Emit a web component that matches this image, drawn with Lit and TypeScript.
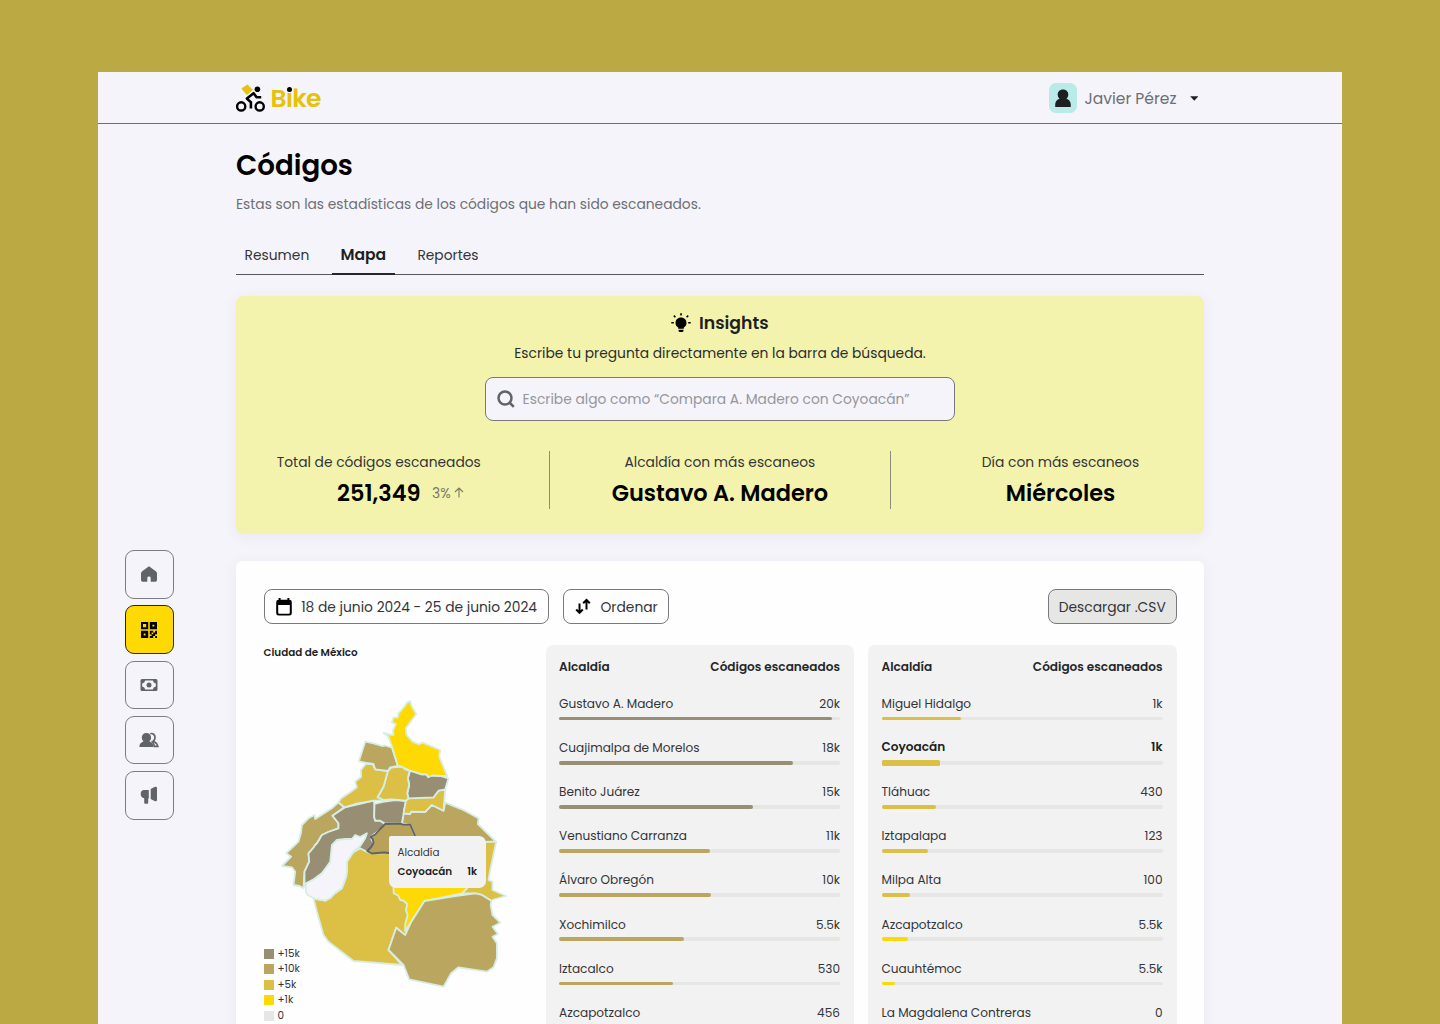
import { LitElement, html, svg, css } from "lit";
import { customElement } from "lit/decorators.js";
import { classMap } from "lit/directives/class-map.js";

interface Row {
  name: string;
  value: string;
  fill: number;
  tone: "dark" | "tan" | "gold" | "sun";
  active?: boolean;
}

const LEFT: Row[] = [
  { name: "Gustavo A. Madero", value: "20k", fill: 97, tone: "dark" },
  { name: "Cuajimalpa de Morelos", value: "18k", fill: 83.3, tone: "dark" },
  { name: "Benito Juárez", value: "15k", fill: 69, tone: "dark" },
  { name: "Venustiano Carranza", value: "11k", fill: 53.8, tone: "tan" },
  { name: "Álvaro Obregón", value: "10k", fill: 54.2, tone: "tan" },
  { name: "Xochimilco", value: "5.5k", fill: 44.5, tone: "tan" },
  { name: "Iztacalco", value: "530", fill: 40.6, tone: "tan" },
  { name: "Azcapotzalco", value: "456", fill: 36, tone: "gold" },
];

const RIGHT: Row[] = [
  { name: "Miguel Hidalgo", value: "1k", fill: 28.4, tone: "gold" },
  { name: "Coyoacán", value: "1k", fill: 20.8, tone: "gold", active: true },
  { name: "Tláhuac", value: "430", fill: 19.5, tone: "gold" },
  { name: "Iztapalapa", value: "123", fill: 16.5, tone: "gold" },
  { name: "Milpa Alta", value: "100", fill: 10.2, tone: "gold" },
  { name: "Azcapotzalco", value: "5.5k", fill: 9.5, tone: "sun" },
  { name: "Cuauhtémoc", value: "5.5k", fill: 4.8, tone: "sun" },
  { name: "La Magdalena Contreras", value: "0", fill: 0, tone: "sun" },
];

const REGIONS: { tone: string; points: string }[] = [
  { tone: "gold", points: "353.3,851.7 360,848.3 366.7,851.7 373.3,853.3 400,853 430,853 470,870 466.7,888.3 424,901 405,935 403.3,935 396,927.7 388.3,950 401.7,965 353.3,961 328.3,941.7 323.3,935 316.7,911.7 313.3,898.3 325,900.7 341.7,888.3 346,876.7 346.7,861.7" },
  { tone: "gold", points: "460,838 485,841.7 496,841.7 490,870 488.3,880 492.3,881.7 492.3,890 505.7,896 495,899 491,900.7 481.7,895 475,893.3 461.7,893.3 466.7,888.3 470,865" },
  { tone: "tan", points: "445,802.7 461.7,809.3 478.3,818.3 477.7,824 493.3,839.3 495,841.4 485,842 470,865 430,860 415,836 410,824.3 401.7,823.3 403.3,813.3 410,814 411,811.7 425,812 431.7,805 443.3,810.7" },
  { tone: "sun", points: "393,880 470,880 466.7,888.3 461.7,893.3 440,898 424.3,901 405,931 405,924 407.5,915 405.7,910 407,904 403,900.5 400,900 398,895.5 393.5,893.3" },
  { tone: "tan", points: "424.3,901 451.7,896.7 475,893.3 481.7,895 491,900.7 490.5,905 492.3,915 500,922.7 492.3,926.7 497.7,934 492.3,936.7 496.7,943.3 496.7,958.3 493.3,967.3 486.7,971.7 458.3,967.3 451,973.3 443.3,986.7 409,979.3 403.3,965 388.3,950 396,927.7 405,935 411,922" },
  { tone: "tan", points: "338.3,802.3 344,807.3 332.3,815.7 338.3,823.3 338.3,828.3 328,832 321.7,835 317,843 315,845 313,848 308.3,853.3 309,861.7 304.3,871.7 303.3,888.3 299.3,886 293.3,885 295,871.7 291.7,867.3 281.7,866 291,856.7 286,853.3 298.3,841.7 300.7,833.3 301.7,825 308.3,818.3 314.3,815 315,819 331.7,808.3" },
  { tone: "dark", points: "373.3,800.7 374.3,804 374,817 375,820.7 380,820.7 385,824 380,830 370,837 373.3,843 371,852 366.7,851.7 360,848.3 328.3,866.7 321.7,873.3 304.3,886.7 304.3,871.7 309,861.7 308.3,853.3 313,848 315,845 317,843 321.7,835 328,832 338.3,828.3 338.3,823.3 332.3,815.7 345,807.3" },
  { tone: "none", points: "366.7,833.3 365,838.3 360,846 353.3,851.7 346.7,861.7 347,870 346,876.7 341.7,888.3 335,893 330,898.3 325,900.7 315,899 307.5,895 305.7,891.7 305.7,883.3 314,879 321.7,873.3 330,861.7 331.7,845 336.7,840 345,839 351.7,839 355,835 360,837" },
  { tone: "dark", points: "374.3,804 385,801.5 395,800 405.7,801 401.7,823.3 385,823.7 380,820.7 375,820.7 374,817" },
  { tone: "gold", points: "405.7,800.7 408.3,798.3 421,797 433.3,797.3 438.3,790.7 445,789.5 443.3,810.7 431.7,805 425,812 411,811.7 410,814 403.3,813.3" },
  { tone: "dark", points: "410,770.7 421.7,774.3 425.7,774 428,777 432,775.5 440,776 448.3,778.3 445,789.3 438.3,790.7 433.3,797.3 408.3,798.3 407,793.3 409,785 407.7,778.3" },
  { tone: "gold", points: "387.7,771 391,767.7 401.7,766.7 405,769.3 409.3,771 407.7,778.3 409,785 407,793.3 408.3,798.3 405.7,800.7 391.7,799.3 383.3,800 377.3,797.3 383.3,786.7" },
  { tone: "gold", points: "365.7,764 372.3,764 375,769.3 387.7,771 383.3,786.7 377.3,797.3 383.3,800 373.3,800.7 355,804 344,807.3 338.3,802.3 341,798.3 350,792.3 356.7,787.3 355,781.7 361,776.7 360.7,770" },
  { tone: "tan", points: "365,741.7 373.3,743.3 381.7,746 385,745.5 391.7,747.7 397.7,766 390,767.3 387.7,771 375,769.3 373.3,764 365,762.7 358.7,761.3" },
  { tone: "sun", points: "410,701 411.7,706.7 416,714 405.7,728.3 406.3,735 412.3,741.7 418.3,744.3 422.7,742.7 440,750 439,756.7 447,776 440,776 432,775.5 428,777 425.7,774 421.7,774.3 410,770.7 401.7,766.7 397.7,766 392.3,748.3 388.3,736.7 383.3,732.7 389,734.5 393.3,735 392.7,730.7 395.7,724 391.7,722.3 393.3,717.7 397.7,717.3 398.3,713.3 404,707 406.7,702.7" },
];

const NAV = [
  svg`<path d="M10 2.300 3.200 7.300Q2 8.200 2 9.600v6.500q0 1.700 1.700 1.700h4.600v-3.900q0-1.300 1.700-1.300t1.700 1.300v3.900h4.600q1.700 0 1.700-1.700V9.600q0-1.400-1.200-2.300Z"/>`,
  svg`<path fill-rule="evenodd" d="M2 2h7.200v7.200H2ZM4 4v3.200h3.200V4ZM10.800 2H18v7.200h-7.200ZM13.400 4.700v1.800h2V4.700ZM2 10.800h7.200V18H2ZM4.700 13.400v2h1.800v-2ZM10.800 10.800h3.400v1.800h-1.600v1.800h-1.800ZM14.200 12.600h1.900v-1.800H18v3.400h-1.900v1.900h-1.900v1.900h-3.400v-1.900h1.800v-1.800h1.600ZM16.100 16.100H18V18h-1.900Z"/>`,
  svg`<path fill-rule="evenodd" d="M3 4h14q1.500 0 1.500 1.500v9q0 1.500-1.500 1.500H3q-1.500 0-1.500-1.500v-9Q1.500 4 3 4ZM6.200 5.600Q5.800 8 3.200 8.400v3.200q2.600.4 3 2.800h7.600q.4-2.400 3-2.800V8.400q-2.600-.4-3-2.800Z"/><circle cx="10" cy="10" r="2.5"/>`,
  svg`<path d="M7.400 2.900c2.700 0 4.700 1.900 4.700 4.500 0 1.700-.7 2.900-1.700 3.700.4 1.100 4.100 1.400 4.100 6H.4c0-4.600 3.700-4.900 4.100-6C3.500 10.300 2.800 9.100 2.800 7.400c0-2.600 1.900-4.500 4.600-4.500Z"/><path d="M11.300 3.700c2.600-.8 4.700 1 4.700 3.700 0 1.600-.6 2.700-1.600 3.600.5 1.200 4.100 1.500 4.500 5.300h-3.500c-.3-2.500-1.400-3.900-2.900-4.900" fill="none" stroke="currentColor" stroke-width="1.7"/>`,
  svg`<path d="M4.600 5h5.200v8.400H9.200v4.400q0 1-1 1H6.200q-1 0-1-1v-4.500Q1.700 12.500 1.700 9.100 1.700 5.400 4.600 5ZM11.700 4 16 1.800q2-.5 2 1.300v11.700q0 1.900-2 1.500l-4.300-2.200Z"/>`,
];

@customElement("ranking-table")
class RankingTable extends LitElement {
  static properties = { rows: { attribute: false } };
  declare rows: Row[];

  static styles = css`
    :host { display: block; background: #f2f2f2; border-radius: 7px; padding: 11.5px 14px 0 13.5px; font-size: 12.1px; color: #333538; }
    .head { display: flex; justify-content: space-between; line-height: 22px; font-weight: 600; color: #25272a; }
    .row { height: 44.1px; box-sizing: border-box; padding-top: 16.1px; }
    .line { display: flex; justify-content: space-between; line-height: 20px; padding-bottom: 2.9px; }
    .track { display: flex; align-items: center; height: 3.5px; border-radius: 2px; background: #e6e6e4; }
    .fill { height: 3.5px; border-radius: 2px; }
    .dark { background: #988e73; }
    .tan { background: #bba65f; }
    .gold { background: #dcbf45; }
    .sun { background: #ffd904; }
    .active { padding-top: 14.7px; }
    .active .line { font-weight: 600; color: #1d1f22; padding-bottom: 4.3px; }
    .active .fill { height: 6.6px; border-radius: 1.5px; }
  `;

  render() {
    return html`
      <div class="head"><span>Alcaldía</span><span>Códigos escaneados</span></div>
      ${this.rows.map(
        (r) => html`<div class=${classMap({ row: true, active: !!r.active })}>
          <div class="line"><span>${r.name}</span><span>${r.value}</span></div>
          <div class="track"><div class="fill ${r.tone}" style="width:${r.fill}%"></div></div>
        </div>`
      )}
    `;
  }
}

@customElement("city-map")
class CityMap extends LitElement {
  static styles = css`
    :host { display: block; color: #333538; }
    .title { font-size: 10.37px; font-weight: 600; line-height: 15px; color: #1d1f22; }
    .stage { display: grid; position: relative; height: 364.2px; }
    .stage > svg, .legend { grid-area: 1 / 1; }
    svg { display: block; }
    polygon { stroke: #d7eee6; stroke-width: 1.8; stroke-linejoin: round; }
    .dark { fill: #988e73; }
    .tan { fill: #bba65f; }
    .gold { fill: #dcbf45; }
    .sun { fill: #ffd904; }
    .none { fill: #f5f4fa; }
    .current { fill: #b8a159; stroke: #606368; }
    .legend { align-self: end; z-index: 1; font-size: 10.37px; justify-self: start; }
    .key { display: flex; align-items: center; gap: 4px; height: 15.5px; }
    .chip { width: 10px; height: 10px; }
    .chip.dark { background: #988e73; }
    .chip.tan { background: #bba65f; }
    .chip.gold { background: #dcbf45; }
    .chip.sun { background: #ffd904; }
    .chip.zero { background: #e6e6e4; }
    .tip { position: absolute; left: 125.5px; top: 176.5px; width: 97px; height: 52px; box-sizing: border-box; padding: 7px 9px 0 8.5px; background: #f2f2f2; border-radius: 2px 7px 7px 7px; font-size: 10.37px; line-height: 19px; }
    .pair { display: flex; justify-content: space-between; font-weight: 600; color: #1d1f22; }
  `;

  render() {
    const keys = [["dark", "+15k"], ["tan", "+10k"], ["gold", "+5k"], ["sun", "+1k"], ["zero", "0"]];
    return html`
      <div class="title">Ciudad de México</div>
      <div class="stage">
        <svg width="282" height="364.2" viewBox="263.8 660 282 364.2">
          ${REGIONS.map((r) => svg`<polygon class=${r.tone} points=${r.points} />`)}
          <polygon class="current" points="385,824 400,823.6 403,824.6 410,824.3 412,829 415,836 430,853 400,853 388,853 384,852.5 371.7,853.5 367,851 371,847 373.3,843 372.5,839 370,837 375,834.5 380,829" />
        </svg>
        <div class="legend">
          ${keys.map(([tone, label]) => html`<div class="key"><i class="chip ${tone}"></i><span>${label}</span></div>`)}
        </div>
        <div class="tip">
          <div>Alcaldía</div>
          <div class="pair"><span>Coyoacán</span><span>1k</span></div>
        </div>
      </div>
    `;
  }
}

@customElement("app-root")
class AppRoot extends LitElement {
  static styles = css`
    :host { display: block; box-sizing: border-box; height: 1024px; overflow: hidden; padding: 72px 98px 0; background: #bba944; font-family: Poppins, Inter, sans-serif; color: #333538; }
    svg { display: block; flex: none; }
    .window { background: #f5f4fa; height: 1100px; }
    .top { display: flex; justify-content: space-between; align-items: center; height: 52px; box-sizing: border-box; border-bottom: 1px solid #6d6f76; padding: 0 144px 0 137.5px; }
    .brand { display: flex; align-items: center; gap: 5px; font-size: 25px; font-weight: 600; letter-spacing: -0.7px; line-height: 30px; color: #e6c20c; }
    .brand svg { margin-top: 1px; }
    .brand-name { padding-top: 3px; }
    .dot { position: relative; }
    .dot::before { content: ""; position: absolute; left: 1px; top: 5.5px; width: 5px; height: 5px; border-radius: 50%; background: #000; }
    .user { display: flex; align-items: center; font-size: 15.55px; color: #6d6f74; line-height: 28px; padding-top: 1px; }
    .user-name { padding-top: 1px; }
    .avatar { width: 28px; height: 29.5px; border-radius: 7px; background: #b9ebe8; display: grid; place-items: center; margin-right: 7px; }
    .caret { margin-left: 13px; }
    .body { display: grid; grid-template-columns: 138px 968px; }
    .side { padding: 426px 0 0 27px; display: flex; flex-direction: column; gap: 6.8px; }
    .nav { width: 48.5px; height: 48.5px; box-sizing: border-box; border: 1px solid #7b7d83; border-radius: 9px; background: transparent; display: grid; place-items: center; padding: 0; color: #606368; }
    .nav svg { fill: currentColor; }
    .nav.on { background: #ffd904; border-color: #2b2a1a; color: #000; }
    main { padding-top: 21px; }
    h1 { margin: 0; font-size: 27.7px; line-height: 41px; font-weight: 600; color: #000; }
    .lead { font-size: 13.82px; line-height: 36px; color: #6d6f74; }
    .tabs { display: flex; gap: 14px; margin-top: 14px; height: 39px; box-sizing: border-box; border-bottom: 1px solid #55575c; line-height: 38px; font-size: 13.82px; }
    .tab { padding: 0 8.6px; }
    .tab.on { font-size: 15.6px; font-weight: 600; color: #1d1f22; height: 39px; box-sizing: border-box; border-bottom: 2px solid #25272a; }
    .insights { margin-top: 21px; height: 237.5px; box-sizing: border-box; padding-top: 14px; background: #f3f3ad; border-radius: 7px; box-shadow: 0 3px 14px rgba(80, 70, 140, 0.07); display: flex; flex-direction: column; align-items: center; }
    .heading { display: flex; align-items: center; gap: 7.5px; font-size: 17.28px; font-weight: 600; line-height: 26px; color: #1d1f22; }
    .hint { margin-top: 6px; font-size: 13.82px; line-height: 22px; color: #2b2d30; }
    .search { margin-top: 13px; width: 470px; height: 43.5px; box-sizing: border-box; border: 1px solid #77797f; border-radius: 8px; background: #f5f4fa; display: flex; align-items: center; gap: 8px; padding-left: 10.6px; font-size: 13.82px; color: #96979c; }
    .search span { padding-top: 1px; }
    .stats { display: grid; grid-template-columns: repeat(3, 340.6px); margin: 30.5px 1.2px 0 0; height: 58px; }
    .stat { text-align: center; font-size: 13.82px; line-height: 22px; }
    .stat + .stat { border-left: 1px solid #8b8c78; }
    .figure { display: grid; grid-template-columns: 1fr auto 1fr; margin-top: 5.6px; font-size: 22.46px; line-height: 28px; font-weight: 600; color: #000; }
    .figure b { grid-column: 2; font-weight: 600; white-space: nowrap; }
    .trend { display: flex; align-items: center; gap: 3.5px; padding-left: 11.5px; font-size: 13.82px; font-weight: 400; color: #77796a; }
    .panel { margin-top: 27.5px; height: 560px; box-sizing: border-box; padding: 28px 27.5px 0; background: #fefefe; border-radius: 7px; box-shadow: 0 3px 14px rgba(80, 70, 140, 0.07); }
    .tools { display: flex; gap: 13.5px; height: 35px; }
    .btn { display: flex; align-items: center; box-sizing: border-box; border: 1px solid #77797f; border-radius: 8px; background: #fefefe; font: inherit; font-size: 13.82px; color: #333538; padding: 0; }
    .btn span { padding-top: 1px; }
    .date { width: 285.5px; padding-left: 11.5px; gap: 9.2px; }
    .sort { width: 106.5px; padding-left: 11.5px; gap: 9.5px; }
    .csv { width: 128.5px; margin-left: auto; justify-content: center; background: #e6e6e4; }
    .grid { display: grid; grid-template-columns: 282px 308.5px 322.5px; margin-top: 20.5px; height: 440px; }
    .grid ranking-table:last-child { margin-left: 14px; }
  `;

  render() {
    return html`
      <div class="window">
        <header class="top">
          <div class="brand">
            <svg width="30" height="29" viewBox="235.8 84 30 29">
              <path d="M241.7 88.7 247.3 84.9 252.2 89.9 246.7 94.6Z" fill="#e6c20c" stroke="#e6c20c" stroke-linejoin="round" />
              <g fill="none" stroke="#000" stroke-width="2.4">
                <circle cx="241" cy="106.4" r="4.1" />
                <circle cx="259.5" cy="106.4" r="4.1" />
                <path d="M250.7 108.5V102.3L246.7 98.6 253.4 93.2 256.4 97.3H261" stroke-width="2.6" stroke-linejoin="round" />
              </g>
              <circle cx="257.2" cy="89.3" r="2.8" />
            </svg>
            <span class="brand-name">B<span class="dot">i</span>ke</span>
          </div>
          <div class="user">
            <span class="avatar">
              <svg width="18" height="20" viewBox="0 0 18 20" fill="#1d1f22"><path d="M9 1.5c3.200 0 5.300 2.200 5.300 5 0 1.900-.8 3.300-1.900 4.300 2.500.9 4.400 2.700 4.400 6v2.200H1.200v-2.200c0-3.300 1.900-5.100 4.400-6C4.500 9.800 3.700 8.400 3.700 6.500c0-2.800 2.100-5 5.300-5Z" /></svg>
            </span>
            <span class="user-name">Javier Pérez</span>
            <svg class="caret" width="8.5" height="5" viewBox="0 0 8.5 5"><path d="M.2.3h8.100L4.250 4.800Z" fill="#1d1f22" /></svg>
          </div>
        </header>
        <div class="body">
          <nav class="side">
            ${NAV.map((icon, i) => html`<button class=${classMap({ nav: true, on: i === 1 })}><svg width="20" height="20" viewBox="0 0 20 20">${icon}</svg></button>`)}
          </nav>
          <main>
            <h1>Códigos</h1>
            <div class="lead">Estas son las estadísticas de los códigos que han sido escaneados.</div>
            <div class="tabs"><span class="tab">Resumen</span><span class="tab on">Mapa</span><span class="tab">Reportes</span></div>
            <section class="insights">
              <div class="heading">
                <svg width="20" height="20" viewBox="0 0 20 20">
                  <path d="M10 4.500c3.200 0 5.500 2.300 5.500 5.400 0 2.100-1.200 3.700-2.700 4.600v1.200H7.200v-1.200C5.700 13.600 4.500 12 4.500 9.900c0-3.100 2.300-5.400 5.500-5.400ZM7.500 16.700h5v.9q0 1.500-1.500 1.500H9q-1.500 0-1.500-1.500Z" />
                  <path d="M10 .3v2.200M.3 9.800h2.500M17.200 9.800h2.500M2.800 2.600l1.600 1.600M17.200 2.600l-1.600 1.600" stroke="#000" stroke-width="1.6" />
                </svg>
                Insights
              </div>
              <div class="hint">Escribe tu pregunta directamente en la barra de búsqueda.</div>
              <div class="search">
                <svg width="18" height="18" viewBox="0 0 18 18" fill="none" stroke="#606368" stroke-width="2.5"><circle cx="8" cy="8" r="6.5" /><path d="m12.500 12.500 4.300 4.300" /></svg>
                <span>Escribe algo como “Compara A. Madero con Coyoacán”</span>
              </div>
              <div class="stats">
                <div class="stat">Total de códigos escaneados
                  <div class="figure"><b>251,349</b><span class="trend">3%<svg width="10" height="11" viewBox="0 0 10 11" fill="none" stroke="#77796a" stroke-width="1.1"><path d="M5 10.500V1M1 5l4-4 4 4" /></svg></span></div>
                </div>
                <div class="stat">Alcaldía con más escaneos<div class="figure"><b>Gustavo A. Madero</b></div></div>
                <div class="stat">Día con más escaneos<div class="figure"><b>Miércoles</b></div></div>
              </div>
            </section>
            <section class="panel">
              <div class="tools">
                <button class="btn date">
                  <svg width="16" height="18" viewBox="0 0 16 18"><path fill-rule="evenodd" d="M2.600 0h2v1.800h6.800V0h2v1.800q2.400 0 2.400 2.400v11q0 2.400-2.400 2.400H2.600Q.2 17.600.2 15.200v-11q0-2.400 2.400-2.400ZM2.200 7v7.700q0 1 1 1h9.600q1 0 1-1V7Z" /></svg>
                  <span>18 de junio 2024 - 25 de junio 2024</span>
                </button>
                <button class="btn sort">
                  <svg width="16" height="17" viewBox="0 0 16 17" fill="none" stroke="#000" stroke-width="2"><path d="M4.500 5.500V14.500M1.200 11.500l3.300 3.400 3.300-3.400M11.500 11.500V2M8.200 5.300l3.300-3.400 3.300 3.400" /></svg>
                  <span>Ordenar</span>
                </button>
                <button class="btn csv"><span>Descargar .CSV</span></button>
              </div>
              <div class="grid">
                <city-map></city-map>
                <ranking-table .rows=${LEFT}></ranking-table>
                <ranking-table .rows=${RIGHT}></ranking-table>
              </div>
            </section>
          </main>
        </div>
      </div>
    `;
  }
}
